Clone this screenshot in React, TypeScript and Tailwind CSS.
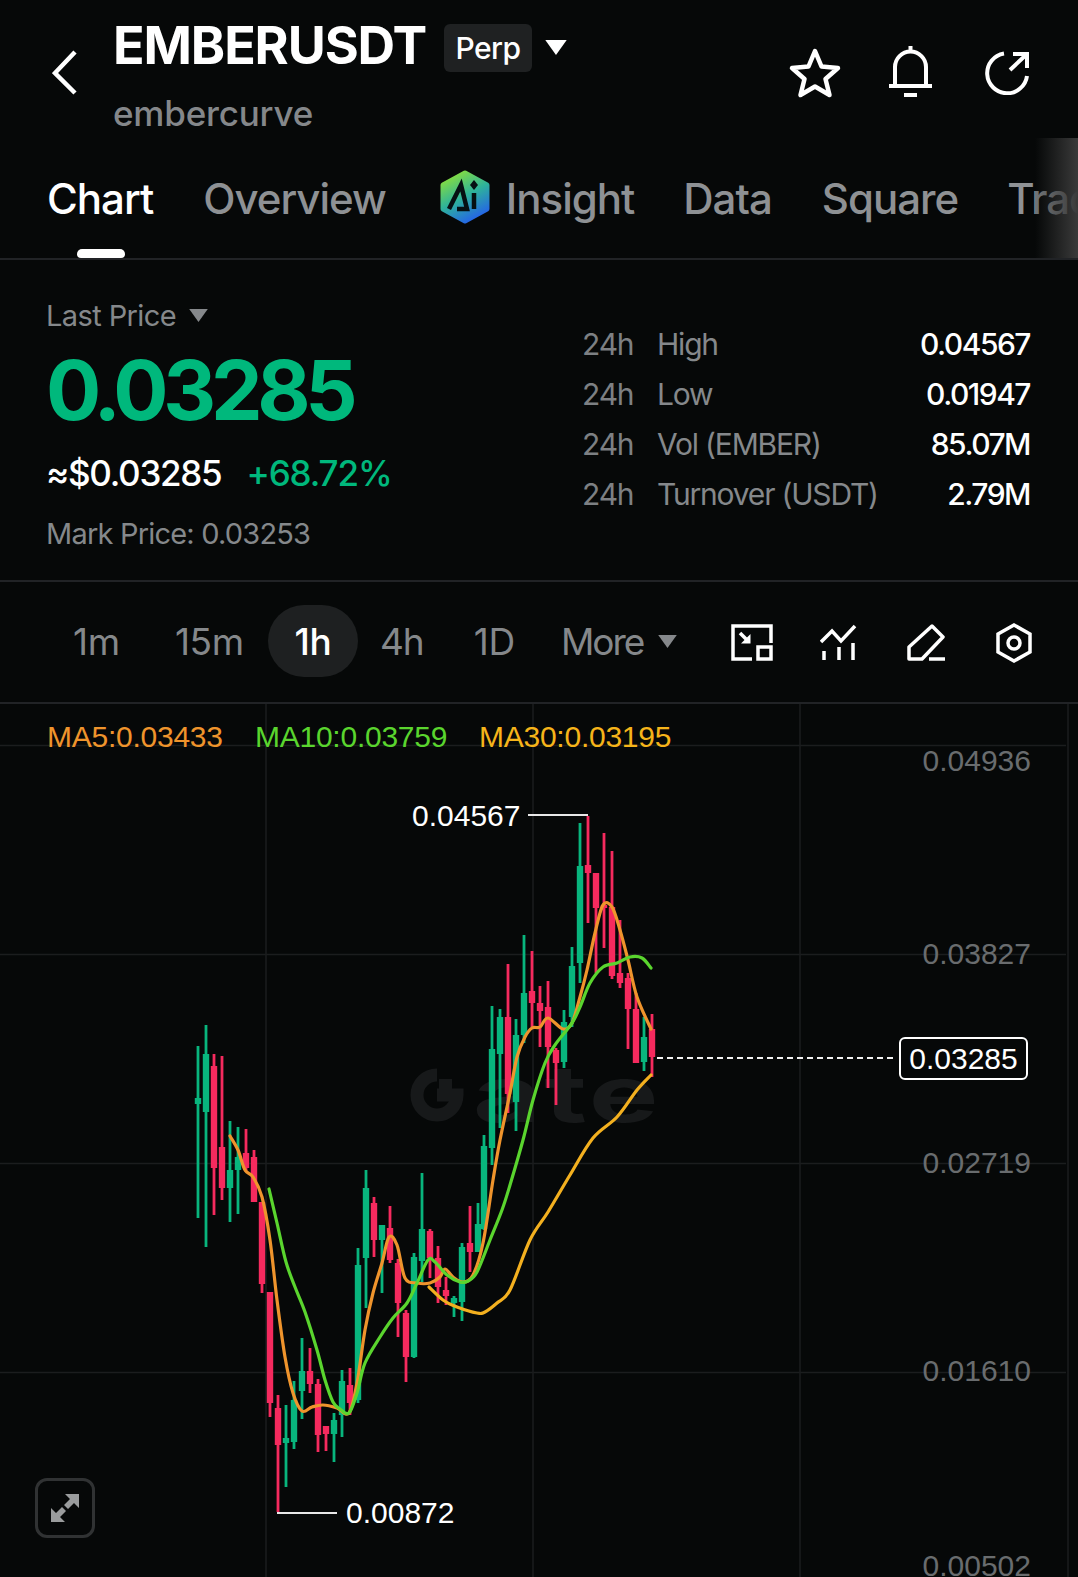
import React from 'react';

type Candle = [number, number, number, number, number, 'g' | 'r'];

// x, high, low, body top, body bottom, colour
const candles: Candle[] = [
  [198, 1046, 1218, 1098, 1104, 'g'],
  [206, 1025, 1247, 1054, 1112, 'g'],
  [214, 1054, 1215, 1066, 1168, 'r'],
  [222, 1056, 1200, 1147, 1188, 'r'],
  [230, 1121, 1222, 1170, 1188, 'g'],
  [238, 1127, 1214, 1157, 1170, 'g'],
  [246, 1129, 1172, 1153, 1168, 'r'],
  [254, 1150, 1202, 1157, 1202, 'r'],
  [262, 1202, 1293, 1202, 1284, 'r'],
  [270, 1292, 1417, 1292, 1403, 'r'],
  [278, 1395, 1512, 1408, 1445, 'r'],
  [286, 1405, 1487, 1438, 1443, 'g'],
  [294, 1381, 1449, 1400, 1442, 'g'],
  [302, 1338, 1419, 1371, 1391, 'g'],
  [310, 1348, 1393, 1371, 1384, 'r'],
  [318, 1379, 1452, 1384, 1435, 'r'],
  [326, 1426, 1451, 1426, 1434, 'r'],
  [334, 1413, 1462, 1420, 1434, 'g'],
  [342, 1370, 1437, 1381, 1415, 'g'],
  [350, 1368, 1415, 1385, 1403, 'r'],
  [358, 1248, 1403, 1265, 1400, 'g'],
  [366, 1170, 1308, 1188, 1258, 'g'],
  [374, 1197, 1257, 1203, 1240, 'r'],
  [382, 1225, 1293, 1225, 1240, 'g'],
  [390, 1206, 1263, 1228, 1260, 'r'],
  [398, 1259, 1337, 1263, 1303, 'r'],
  [406, 1310, 1382, 1313, 1357, 'r'],
  [414, 1253, 1358, 1257, 1357, 'g'],
  [422, 1173, 1282, 1229, 1261, 'g'],
  [430, 1229, 1278, 1231, 1258, 'r'],
  [438, 1246, 1303, 1258, 1287, 'r'],
  [446, 1277, 1305, 1290, 1296, 'r'],
  [454, 1296, 1317, 1298, 1303, 'g'],
  [462, 1243, 1321, 1247, 1302, 'g'],
  [470, 1206, 1272, 1243, 1252, 'r'],
  [478, 1203, 1252, 1224, 1252, 'g'],
  [484, 1135, 1230, 1146, 1229, 'g'],
  [492, 1006, 1165, 1049, 1148, 'g'],
  [500, 1009, 1128, 1017, 1054, 'g'],
  [508, 964, 1113, 1017, 1094, 'r'],
  [516, 1019, 1131, 1035, 1102, 'g'],
  [524, 935, 1043, 993, 1035, 'g'],
  [532, 951, 1027, 991, 1003, 'r'],
  [540, 986, 1047, 1003, 1011, 'r'],
  [548, 981, 1088, 1007, 1047, 'r'],
  [556, 1048, 1105, 1050, 1063, 'r'],
  [564, 1010, 1068, 1022, 1062, 'g'],
  [572, 947, 1027, 966, 1017, 'g'],
  [580, 823, 983, 866, 963, 'g'],
  [588, 816, 923, 865, 873, 'r'],
  [596, 873, 973, 873, 908, 'r'],
  [604, 833, 948, 905, 908, 'r'],
  [612, 851, 979, 907, 976, 'r'],
  [620, 920, 988, 973, 983, 'r'],
  [628, 973, 1049, 978, 1009, 'r'],
  [636, 993, 1063, 1009, 1063, 'r'],
  [644, 1017, 1071, 1037, 1062, 'g'],
  [652, 1014, 1077, 1029, 1057, 'r'],
];

const ma5 = '230,1136 238,1150 245,1170 253,1177 262,1197 270,1240 277,1300 285,1357 293,1393 302,1411 312,1407 323,1405 337,1408 349,1413 357,1383 365,1330 373,1293 382,1263 389,1237 397,1245 405,1278 417,1283 430,1283 440,1277 445,1269 453,1277 463,1282 473,1275 483,1243 493,1180 500,1140 510,1093 517,1057 525,1037 532,1028 540,1027 548,1018 563,1029 572,1023 580,997 587,970 595,933 603,905 612,907 620,930 628,960 637,997 651,1029';
const ma10 = '269,1189 277,1223 286,1262 295,1287 305,1312 317,1350 325,1380 333,1402 340,1409 349,1413 357,1393 365,1363 380,1337 393,1318 407,1303 417,1283 428,1260 435,1262 447,1275 460,1282 468,1281 477,1272 490,1240 502,1210 510,1185 523,1140 533,1100 545,1063 555,1045 572,1023 580,1007 590,983 603,967 617,963 630,957 642,958 651,968';
const ma30 = '429,1287 443,1300 457,1307 477,1313 485,1312 497,1303 510,1290 530,1240 548,1212 570,1175 593,1138 617,1117 637,1090 651,1075';

// catmull-rom through the points so the averages look like curves
function smooth(points: string) {
  const p = points.split(' ').map((s) => s.split(',').map(Number));
  let d = `M${p[0][0]} ${p[0][1]}`;
  for (let i = 0; i < p.length - 1; i++) {
    const a = p[Math.max(i - 1, 0)];
    const b = p[i];
    const c = p[i + 1];
    const e = p[Math.min(i + 2, p.length - 1)];
    d += `C${b[0] + (c[0] - a[0]) / 6} ${b[1] + (c[1] - a[1]) / 6} ${c[0] - (e[0] - b[0]) / 6} ${c[1] - (e[1] - b[1]) / 6} ${c[0]} ${c[1]}`;
  }
  return d;
}

const tabClass = 'h-fit shrink-0 whitespace-nowrap text-[42px] leading-none font-medium tracking-[-1px]';
const axisClass = "absolute right-[47px] text-[30px] leading-[34px] text-[#696c6e] [font-family:'Liberation_Sans',sans-serif]";

function Triangle({ className }: { className: string }) {
  return (
    <svg viewBox="0 0 20 14" className={className} fill="currentColor">
      <path d="M0 0H20L10 14Z" />
    </svg>
  );
}

function Header() {
  return (
    <div className="flex h-[138px] shrink-0 text-white">
      <svg viewBox="0 0 25 45" className="ml-[52px] mt-[50px] h-[45px] w-[25px]" fill="none" stroke="currentColor" strokeWidth="4.5">
        <path d="M23 2L3 23L23 43" />
      </svg>
      <div className="ml-[36px] flex flex-col">
        <div className="mt-[22px] flex h-[48px] items-center">
          <span className="text-[52px] leading-none font-bold tracking-[-1.1px]">EMBERUSDT</span>
          <span className="ml-[18px] mt-[4px] flex h-[48px] w-[88px] items-center justify-center rounded-md bg-[#1f2122] text-[30px] font-medium tracking-[-0.5px]">Perp</span>
          <Triangle className="ml-[13px] mt-[2px] h-[15px] w-[22px]" />
        </div>
        <div className="mt-[26px] text-[35px] leading-none font-medium tracking-[-0.2px] text-[#84878a]">embercurve</div>
      </div>
      <div className="ml-auto mr-[49px] mt-[46px] flex items-start">
        <svg viewBox="0 0 54 54" className="h-[54px] w-[54px]" fill="none" stroke="currentColor" strokeWidth="4.5" strokeLinejoin="round">
          <path d="M27 5L33.5 20.5L50 22L37.5 33L41.5 49L27 40.5L12.5 49L16.5 33L4 22L20.5 20.5Z" />
        </svg>
        <svg viewBox="0 0 43 51" className="ml-[47px] h-[51px] w-[43px]" fill="none" stroke="currentColor" strokeWidth="4">
          <path d="M21.5 0V5M6 40V21a15.5 15.5 0 0 1 31 0V40M0 40H43M15 49H28" />
        </svg>
        <svg viewBox="0 0 44 44" className="ml-[53px] mt-[5px] h-[44px] w-[44px]" fill="none" stroke="currentColor" strokeWidth="4">
          <path d="M19 2.5A20 20 0 1 0 42 25M25 19L42 3M28 3H42V17" />
        </svg>
      </div>
    </div>
  );
}

function Tabs() {
  return (
    <div className="relative flex h-[122px] shrink-0 overflow-hidden border-b-2 border-[#212326] pt-[40px] text-[#8e9194]">
      <div className={`ml-[47px] text-white ${tabClass}`}>Chart</div>
      <div className={`ml-[50px] ${tabClass}`}>Overview</div>
      <svg viewBox="0 0 50 54" className="ml-[54px] -mt-[8px] h-[54px] w-[50px] shrink-0">
        <defs>
          <linearGradient id="aiGrad" x1="0.2" y1="0" x2="0.7" y2="1">
            <stop offset="0" stopColor="#8be03a" />
            <stop offset="0.5" stopColor="#2eb39a" />
            <stop offset="1" stopColor="#2462ea" />
          </linearGradient>
        </defs>
        <path d="M25 3L47 15V39L25 51L3 39V15Z" fill="url(#aiGrad)" stroke="url(#aiGrad)" strokeWidth="5" strokeLinejoin="round" />
        <path d="M9 39L21 15L27 39H17" fill="none" stroke="#061012" strokeWidth="4.5" />
        <path d="M34 23V39" fill="none" stroke="#061012" strokeWidth="4.5" />
        <path d="M34 10L38 15L34 20L30 15Z" fill="#061012" />
      </svg>
      <div className={`ml-[16px] ${tabClass}`}>Insight</div>
      <div className={`ml-[49px] ${tabClass}`}>Data</div>
      <div className={`ml-[50px] ${tabClass}`}>Square</div>
      <div className={`ml-[49px] ${tabClass}`}>Trade</div>
      <div className="absolute right-0 top-0 bottom-0 w-[43px] bg-gradient-to-r from-[#060808]/20 to-[#3a3a3a]" />
      <div className="absolute bottom-0 left-[77px] h-[9px] w-[48px] rounded-t-[5px] rounded-b-sm bg-white" />
    </div>
  );
}

function StatRow({ label, value }: { label: string; value: string }) {
  return (
    <div className="flex h-[50px] items-center text-[30px] leading-none tracking-[-1.2px]">
      <span className="w-[75px] text-[#7d8083]">24h</span>
      <span className="text-[#85888b]">{label}</span>
      <span className="ml-auto font-medium tracking-[-1.5px] text-white">{value}</span>
    </div>
  );
}

function PricePanel() {
  return (
    <div className="flex h-[322px] shrink-0 border-b-2 border-[#212326] pl-[46px] pr-[48px]">
      <div className="flex flex-col">
        <div className="mt-[41px] flex items-center text-[29px] leading-none tracking-[-0.6px] text-[#85888b]">
          Last Price
          <Triangle className="ml-[13px] h-[13px] w-[19px]" />
        </div>
        <div className="mt-[20px] text-[82px] leading-none font-bold tracking-[-5.3px] text-[#00b87c]">0.03285</div>
        <div className="mt-[24px] flex items-center text-[35px] leading-none font-medium">
          <span className="tracking-[-1.3px] text-white">≈$0.03285</span>
          <span className="ml-[25px] tracking-[-1.1px] text-[#00b87c]">+68.72%</span>
        </div>
        <div className="mt-[28px] text-[29px] leading-none tracking-[-0.8px] text-[#85888b]">Mark Price: 0.03253</div>
      </div>
      <div className="ml-auto mt-[59px] w-[448px]">
        <StatRow label="High" value="0.04567" />
        <StatRow label="Low" value="0.01947" />
        <StatRow label="Vol (EMBER)" value="85.07M" />
        <StatRow label="Turnover (USDT)" value="2.79M" />
      </div>
    </div>
  );
}

function Toolbar() {
  return (
    <div className="flex h-[122px] shrink-0 items-center border-b-2 border-[#212326] text-[#85888b]">
      <div className="-mt-[2px] flex items-center text-[37px] leading-none tracking-[-0.3px]">
        <span className="ml-[73px]">1m</span>
        <span className="ml-[55px]">15m</span>
        <span className="ml-[24px] flex h-[72px] w-[90px] items-center justify-center rounded-[36px] bg-[#1e2021] font-medium text-white">1h</span>
        <span className="ml-[22px] tracking-[-1px]">4h</span>
        <span className="ml-[50px]">1D</span>
        <span className="ml-[46px] tracking-[-2px]">More</span>
        <Triangle className="ml-[15px] h-[13px] w-[19px]" />
      </div>
      <div className="ml-auto mr-[46px] mt-[2px] flex items-center text-white">
        <svg viewBox="0 0 42 38" className="h-[38px] w-[42px]" fill="none" stroke="currentColor" strokeWidth="3.5">
          <path d="M21 35H2V2H40V19" />
          <rect x="27" y="23" width="13" height="12" />
          <path d="M9 9L17 17" />
          <path d="M19.5 10V19.5H10Z" fill="currentColor" stroke="none" />
        </svg>
        <svg viewBox="0 0 38 38" className="ml-[47px] h-[38px] w-[38px]" fill="none" stroke="currentColor" strokeWidth="3.5">
          <path d="M1 18L12 7L21 17L35 2" />
          <path d="M4 27V36M19 23V36M33 19V36" />
        </svg>
        <svg viewBox="0 0 38 38" className="ml-[49px] h-[38px] w-[38px]" fill="none" stroke="currentColor" strokeWidth="3.5" strokeLinejoin="round">
          <path d="M2 35V23L25 2L36 13L15 35Z" />
          <path d="M22 35H38" />
        </svg>
        <svg viewBox="0 0 36 40" className="ml-[51px] h-[40px] w-[36px]" fill="none" stroke="currentColor" strokeWidth="3.5">
          <path d="M18 2L34 11V29L18 38L2 29V11Z" />
          <circle cx="18" cy="20" r="6" />
        </svg>
      </div>
    </div>
  );
}

function Chart() {
  return (
    <div className="relative min-h-0 flex-1 overflow-hidden">
      {/* watermark */}
      <svg viewBox="0 0 56 56" className="absolute left-[409px] top-[363px] h-[56px] w-[56px]" fill="none">
        <path d="M28 8A20 20 0 1 0 48 28H28" stroke="#17191a" strokeWidth="13" />
        <rect x="30" y="12" width="13" height="13" fill="#17191a" />
      </svg>
      <div className="absolute left-[473px] top-[351px] origin-left scale-x-[1.5] text-[78px] leading-[78px] font-bold tracking-[2px] text-[#17191a]">ate</div>

      <svg viewBox="0 704 1078 873" className="absolute inset-0 h-full w-full" fill="none">
        {[745, 954, 1163, 1372].map((y) => (
          <line key={y} x1="0" x2="1066" y1={y + 0.5} y2={y + 0.5} stroke="#1b1d1e" strokeWidth="1.5" />
        ))}
        {[266, 533, 800, 1068].map((x) => (
          <line key={x} y1="703" y2="1577" x1={x} x2={x} stroke="#1b1d1e" strokeWidth="1.5" />
        ))}
        {candles.map(([x, high, low, top, bottom, c]) => {
          const color = c === 'g' ? '#08b57d' : '#f52a5e';
          return (
            <g key={x} fill={color}>
              <rect x={x - 1.4} y={high} width="2.8" height={low - high} />
              <rect x={x - 3.2} y={top} width="6.4" height={bottom - top} />
            </g>
          );
        })}
        <path d={smooth(ma30)} stroke="#f3b01f" strokeWidth="3.2" strokeLinecap="round" />
        <path d={smooth(ma5)} stroke="#ef942c" strokeWidth="3.2" strokeLinecap="round" />
        <path d={smooth(ma10)} stroke="#5ad52e" strokeWidth="3.2" strokeLinecap="round" />
        <path d="M528 815H588M277 1513H337" stroke="#e8e8e8" strokeWidth="1.8" />
        <path d="M657 1058H895" stroke="#f2f2f2" strokeWidth="1.8" strokeDasharray="6 4" />
      </svg>

      {/* MA values */}
      <div className="absolute left-[47px] top-[16px] flex text-[30px] leading-[34px] tracking-[-0.25px] [font-family:'Liberation_Sans',sans-serif]">
        <span className="w-[208px] text-[#ef942c]">MA5:0.03433</span>
        <span className="w-[224px] text-[#5ad52e]">MA10:0.03759</span>
        <span className="text-[#f6b41a]">MA30:0.03195</span>
      </div>

      {/* axis labels */}
      <div className={`${axisClass} top-[40px]`}>0.04936</div>
      <div className={`${axisClass} top-[233px]`}>0.03827</div>
      <div className={`${axisClass} top-[442px]`}>0.02719</div>
      <div className={`${axisClass} top-[650px]`}>0.01610</div>
      <div className={`${axisClass} top-[845px]`}>0.00502</div>

      <div className="absolute left-[412px] top-[95px] text-[30px] leading-[34px] text-white [font-family:'Liberation_Sans',sans-serif]">0.04567</div>
      <div className="absolute left-[346px] top-[792px] text-[30px] leading-[34px] text-white [font-family:'Liberation_Sans',sans-serif]">0.00872</div>
      <div className="absolute left-[899px] top-[333px] flex h-[43px] w-[129px] items-center justify-center rounded-md border-2 border-white bg-[#060808] text-[30px] leading-none text-white [font-family:'Liberation_Sans',sans-serif]">0.03285</div>

      <div className="absolute left-[35px] top-[774px] flex h-[60px] w-[60px] items-center justify-center rounded-xl border-[3px] border-[#303233] text-[#9a9c9d]">
        <svg viewBox="0 0 28 28" className="h-[28px] w-[28px]" fill="currentColor">
          <path d="M28 0V14L23 9L17 15L13 11L19 5L14 0Z" />
          <path d="M0 28V14L5 19L11 13L15 17L9 23L14 28Z" />
        </svg>
      </div>
    </div>
  );
}

export default function App() {
  return (
    <div className="flex h-[1577px] w-[1078px] flex-col overflow-hidden bg-[#060808] [font-family:Inter,sans-serif]">
      <Header />
      <Tabs />
      <PricePanel />
      <Toolbar />
      <Chart />
    </div>
  );
}
